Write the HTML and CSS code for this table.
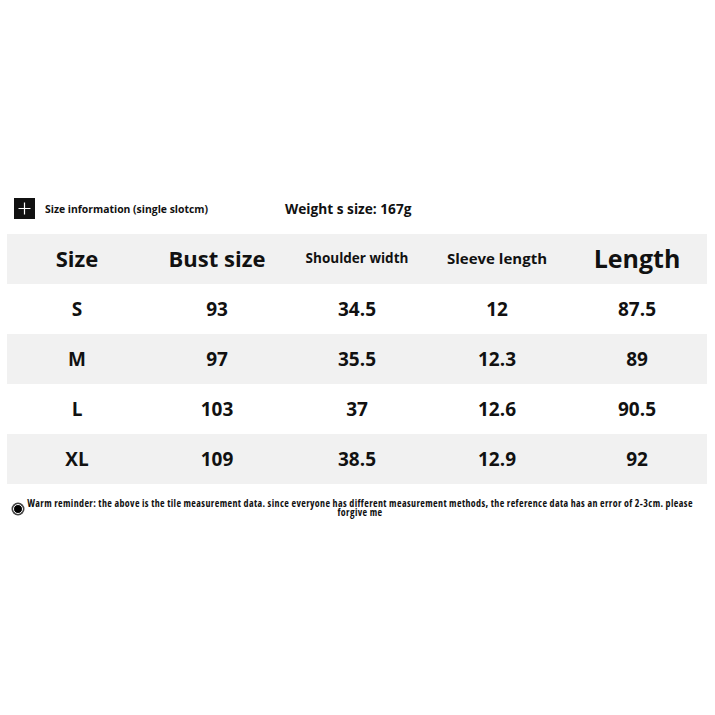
FILE: index.html
```html
<!DOCTYPE html>
<html>
<head>
<meta charset="utf-8">
<link rel="stylesheet" href="styles.css">
</head>
<body>
<div class="page">
  <div class="info">
    <div class="info-left">
      <span class="plus-icon">
        <svg width="21" height="21" viewBox="0 0 21 21"><rect width="21" height="21" fill="#111"/><path d="M10.5 4.5v12M4.5 10.5h12" stroke="#fff" stroke-width="1.2"/></svg>
      </span>
      <span class="info-text">Size information (single slotcm)</span>
    </div>
    <div class="weight">Weight s size: 167g</div>
  </div>
  <div class="table">
    <div class="row head">
      <div class="cell h-size">Size</div>
      <div class="cell h-bust">Bust size</div>
      <div class="cell h-small">Shoulder width</div>
      <div class="cell h-sleeve">Sleeve length</div>
      <div class="cell h-len">Length</div>
    </div>
    <div class="row">
      <div class="cell">S</div><div class="cell">93</div><div class="cell">34.5</div><div class="cell">12</div><div class="cell">87.5</div>
    </div>
    <div class="row gray">
      <div class="cell">M</div><div class="cell">97</div><div class="cell">35.5</div><div class="cell">12.3</div><div class="cell">89</div>
    </div>
    <div class="row">
      <div class="cell">L</div><div class="cell">103</div><div class="cell">37</div><div class="cell">12.6</div><div class="cell">90.5</div>
    </div>
    <div class="row gray">
      <div class="cell">XL</div><div class="cell">109</div><div class="cell">38.5</div><div class="cell">12.9</div><div class="cell">92</div>
    </div>
  </div>
  <div class="note">
    <span class="dot"></span>
    <p class="note-text">Warm reminder: the above is the tile measurement data. since everyone has different measurement methods, the reference data has an error of 2-3cm. please forgive me</p>
  </div>
</div>
</body>
</html>
```
FILE: styles.css
```css
html, body {
  margin: 0;
  padding: 0;
  background: #fff;
}
body {
  font-family: "Open Sans", "Noto Sans", sans-serif;
  color: #111;
  min-height: 715px;
}
.page {
  padding: 198px 8px 0 7px;
  min-height: 715px;
  box-sizing: border-box;
}
.info {
  display: flex;
  align-items: center;
  height: 21px;
  padding-left: 7px;
}
.info-left {
  display: flex;
  align-items: center;
  gap: 10px;
  width: 271px;
}
.plus-icon {
  display: block;
  width: 21px;
  height: 21px;
}
.plus-icon svg { display: block; }
.info-text {
  font-size: 10.4px;
  font-weight: 700;
}
.weight {
  font-size: 13.7px;
  font-weight: 700;
}
.table {
  margin-top: 15px;
  width: 700px;
}
.row {
  display: grid;
  grid-template-columns: repeat(5, 1fr);
  height: 50px;
  align-items: center;
}
.head {
  padding-bottom: 3px;
  box-sizing: border-box;
}
.head, .gray {
  background: #f1f1f1;
}
.cell {
  text-align: center;
  font-size: 19px;
  font-weight: 700;
}
.h-size, .h-bust {
  font-size: 22px;
}
.h-small {
  font-size: 13.5px;
}
.h-sleeve {
  font-size: 15px;
}
.h-len {
  font-size: 25px;
}
.note {
  position: relative;
  margin-top: 15px;
  padding: 0 7px 0 13px;
}
.dot {
  position: absolute;
  left: 6px;
  top: 5px;
  width: 8px;
  height: 8px;
  border-radius: 50%;
  background: #000;
  border: 1px solid #fff;
  box-shadow: 0 0 0 1.5px #444;
}
.note-text {
  margin: 0;
  text-align: center;
  font-stretch: condensed;
  font-size: 10px;
  line-height: 9px;
  font-weight: 700;
  letter-spacing: 0.38px;
}
```
